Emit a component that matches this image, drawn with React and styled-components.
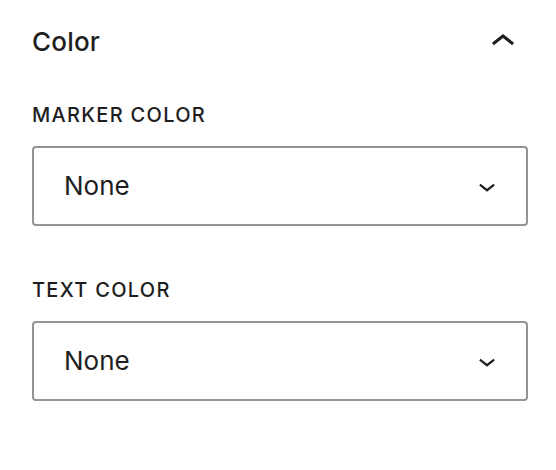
import React from "react";
import styled, { createGlobalStyle } from "styled-components";

const GlobalStyle = createGlobalStyle`
  body {
    margin: 0;
    background: #ffffff;
    font-family: Inter, "Noto Sans", sans-serif;
    color: #1e1e1e;
  }
`;

function ChevronUp() {
  return (
    <svg width="48" height="48" viewBox="0 0 24 24" aria-hidden="true">
      <path
        fill="#1e1e1e"
        d="M6.5 12.4L12 8l5.5 4.4-.9 1.2L12 10l-4.6 3.6-.9-1.2z"
      />
    </svg>
  );
}

function ChevronDown() {
  return (
    <svg width="34" height="34" viewBox="0 0 24 24" aria-hidden="true">
      <path
        fill="#1e1e1e"
        d="M17.5 11.6L12 16l-5.5-4.4.9-1.2L12 14l4.6-3.6z"
      />
    </svg>
  );
}

function ColorSelect({ label, value }) {
  return (
    <Field>
      <Label>{label}</Label>
      <Select>
        <span>{value}</span>
        <ChevronDown />
      </Select>
    </Field>
  );
}

export default function App() {
  return (
    <>
      <GlobalStyle />
      <Panel>
        <Header>
          <Title>Color</Title>
          <ChevronUp />
        </Header>
        <Body>
          <ColorSelect label="Marker color" value="None" />
          <ColorSelect label="Text color" value="None" />
        </Body>
      </Panel>
    </>
  );
}

const Panel = styled.div`
  width: 556px;
  height: 470px;
  box-sizing: border-box;
  padding: 26px 29px 0 32px;
`;

const Header = styled.div`
  display: flex;
  align-items: center;
  justify-content: space-between;
  height: 32px;

  svg {
    margin-right: 0;
  }
`;

const Title = styled.h2`
  margin: 0;
  font-size: 26px;
  line-height: 32px;
  font-weight: 500;
  letter-spacing: 0.2px;
`;

const Body = styled.div`
  display: flex;
  flex-direction: column;
  gap: 52px;
  padding-top: 45px;
`;

const Field = styled.div`
  display: flex;
  flex-direction: column;
  gap: 19px;
`;

const Label = styled.label`
  font-size: 20px;
  line-height: 24px;
  font-weight: 500;
  text-transform: uppercase;
  letter-spacing: 1.3px;
`;

const Select = styled.div`
  display: flex;
  align-items: center;
  justify-content: space-between;
  box-sizing: border-box;
  height: 80px;
  width: 496px;
  padding: 0 22px 0 30px;
  border: 2px solid #949494;
  border-radius: 4px;
  font-size: 26px;
  line-height: 32px;

  span {
    padding-bottom: 1px;
  }
`;
